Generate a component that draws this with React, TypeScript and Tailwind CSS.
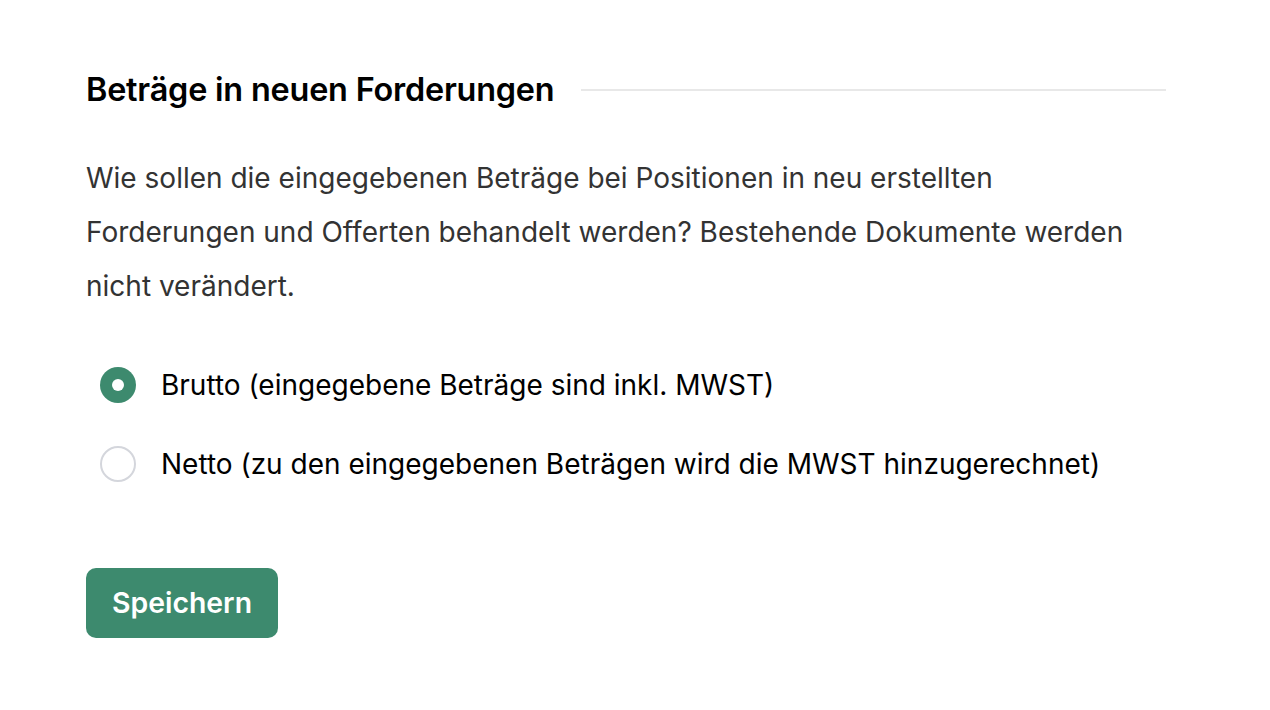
import React, { useState } from 'react';

export default function App() {
  const [mode, setMode] = useState<'brutto' | 'netto'>('brutto');

  return (
    <div className="min-h-screen bg-white" style={{ fontFamily: 'Inter, "Noto Sans", sans-serif' }}>
      <div className="w-[1080px] ml-[86px] pt-[70px]">
        {/* Heading */}
        <div className="flex items-center gap-[27px]">
          <h2 className="text-[32.4px] font-semibold text-black leading-[40px] tracking-[-0.2px]">
            Beträge in neuen Forderungen
          </h2>
          <div className="flex-1 h-[2px] bg-[#e8e8e8]" />
        </div>

        <p className="mt-[41px] w-[1070px] text-[28px] leading-[54px] text-[#333333]">
          Wie sollen die eingegebenen Beträge bei Positionen in neu erstellten Forderungen und
          Offerten behandelt werden? Bestehende Dokumente werden nicht verändert.
        </p>

        {/* Options */}
        <div className="mt-[54px] ml-[14px] flex flex-col gap-[43px]">
          <label className="flex items-center gap-[25px] cursor-pointer" onClick={() => setMode('brutto')}>
            {mode === 'brutto' ? (
              <span className="w-9 h-9 rounded-full bg-[#3d8a6e] flex items-center justify-center">
                <span className="w-[12px] h-[12px] rounded-full bg-white" />
              </span>
            ) : (
              <span className="w-9 h-9 rounded-full border-2 border-[#d4d6dc] bg-white" />
            )}
            <span className="text-[28px] text-black leading-[36px]">Brutto (eingegebene Beträge sind inkl. MWST)</span>
          </label>
          <label className="flex items-center gap-[25px] cursor-pointer" onClick={() => setMode('netto')}>
            {mode === 'netto' ? (
              <span className="w-9 h-9 rounded-full bg-[#3d8a6e] flex items-center justify-center">
                <span className="w-[12px] h-[12px] rounded-full bg-white" />
              </span>
            ) : (
              <span className="w-9 h-9 rounded-full border-2 border-[#d4d6dc] bg-white" />
            )}
            <span className="text-[28px] text-black leading-[36px]">
              Netto (zu den eingegebenen Beträgen wird die MWST hinzugerechnet)
            </span>
          </label>
        </div>

        <button className="mt-[86px] h-[70px] px-[26px] rounded-[10px] bg-[#3d8a6e] text-white text-[28.4px] font-semibold">
          Speichern
        </button>
      </div>
    </div>
  );
}
